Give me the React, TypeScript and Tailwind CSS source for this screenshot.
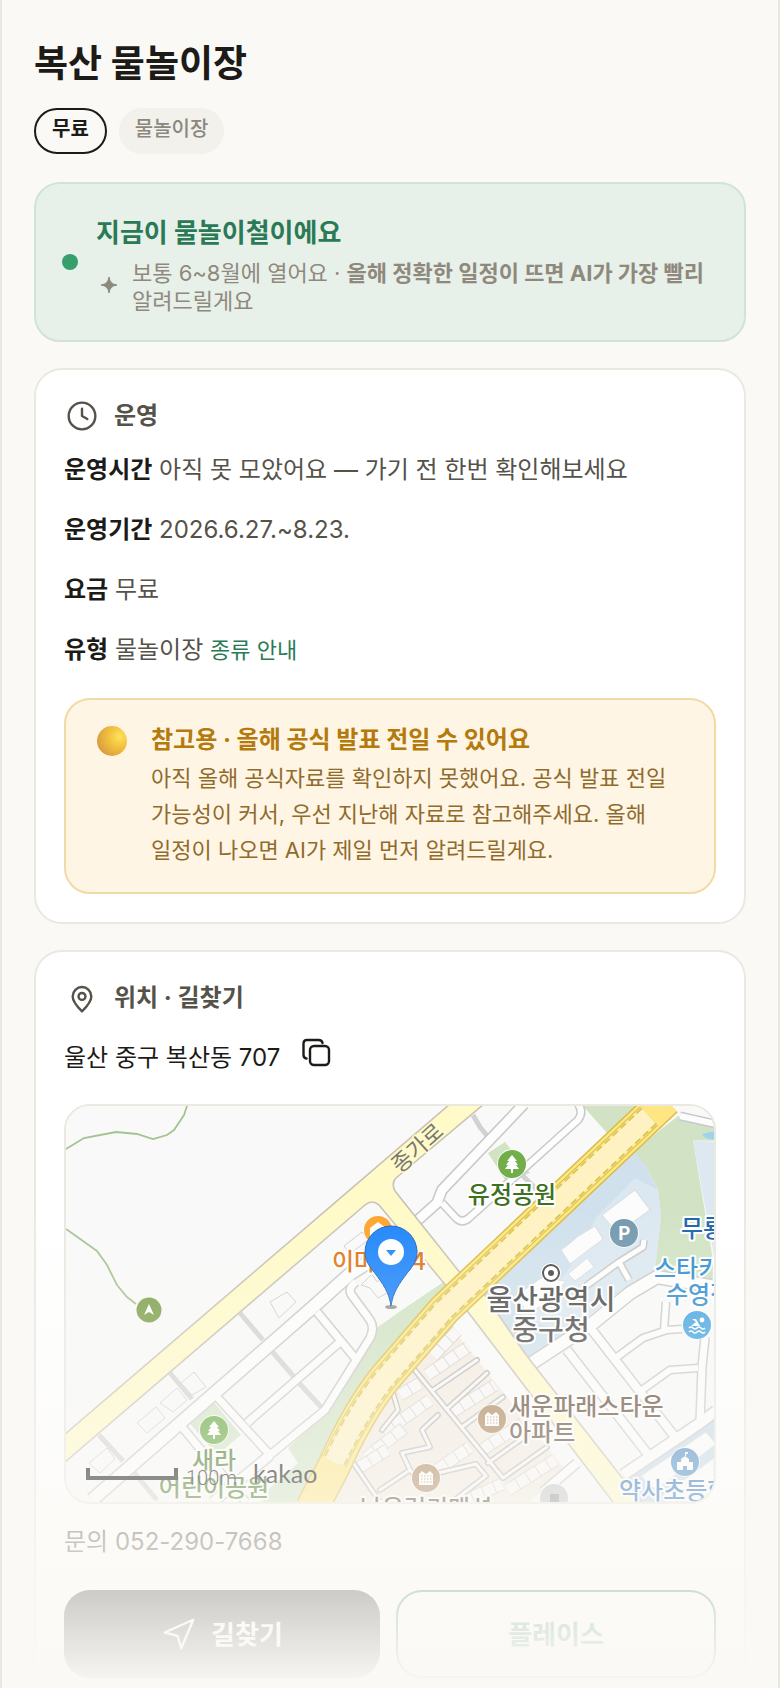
import type { ReactNode } from "react";

const rows = [
  { label: "운영시간", value: "아직 못 모았어요 — 가기 전 한번 확인해보세요" },
  { label: "운영기간", value: "2026.6.27.~8.23." },
  { label: "요금", value: "무료" },
  { label: "유형", value: "물놀이장", link: "종류 안내" },
];

// narrow streets: white line with a grey casing
const streets = [
  { d: "M26 394L246 202L284 168L312 150", w: 12 },
  { d: "M151 291L204 349L259 304L304 232Q309 222 304 214L285 188Q282 182 290 176", w: 7 },
  { d: "M181 317L274 236", w: 7 },
  { d: "M251 206L289 252", w: 7 },
  { d: "M116 321L141 351L180 396", w: 7 },
  { d: "M147 396L204 349", w: 9 },
  { d: "M458 -2L376 84L371 97L352 114", w: 9 },
  { d: "M512 -2Q518 6 512 14L403 112Q396 118 390 112L376 97", w: 6 },
  { d: "M466 257L527 217L564 187L591 171L650 181", w: 12 },
  { d: "M501 244L584 351", w: 8 },
  { d: "M526 224L609 331", w: 8 },
  { d: "M551 251L577 232L601 224L616 223", w: 6 },
  { d: "M576 284L604 264L632 262", w: 6 },
  { d: "M639 231L636 261L634 316", w: 7 },
  { d: "M557 369L634 317L650 305", w: 10 },
  { d: "M477 386L511 357", w: 8 },
  { d: "M614 10L650 18", w: 6 },
  { d: "M520 180L553 156L577 141L578 134", w: 5 },
  { d: "M553 156L563 174", w: 5 },
  { d: "M600 196L598 224", w: 6 },
];

const lanes = [
  "M347 262L437 372L481 341",
  "M367 284L411 254",
  "M382 302L421 267",
  "M396 321L437 291",
  "M422 357L464 327",
  "M327 287L332 304L316 324",
  "M372 309L356 324L364 341L336 347L344 364L314 384",
  "M344 364L351 372L410 358L420 370L386 396",
  "M286 355L314 396",
];

const houses = [
  "M361 269L402 241",
  "M367 250L391 225",
  "M386 306L429 279",
  "M334 289L354 277",
  "M318 326L364 294",
  "M300 352L338 322",
  "M416 344L457 317",
  "M442 384L489 354",
  "M371 364L404 341",
  "M294 361L321 344",
  "M396 396L436 378",
];

const buildings = [
  "M115 277L128 266L140 281L126 289Z",
  "M94 297L111 282L121 294L107 306Z",
  "M71 317L90 301L99 312L81 327Z",
  "M23 357L41 342L49 353L34 367Z",
  "M204 196L221 186L230 196L213 212Z",
  "M278 140L296 126L302 134L284 148Z",
  "M295 179L306 168L311 176L318 170L326 184L312 192L304 182Z",
];

const alleys = [
  "M174 207L197 234",
  "M204 243L229 272",
  "M232 276L256 302",
  "M104 267L126 293",
  "M33 329L57 355",
  "M66 364L91 394",
  "M407 9L414 21L427 37",
  "M456 69L474 87",
];

function Marker({ x, y, fill, children }: { x: number; y: number; fill: string; children?: ReactNode }) {
  return (
    <g transform={`translate(${x} ${y})`}>
      <circle r="15" fill="#fff" fillOpacity="0.8" />
      <circle r="14" fill={fill} />
      {children}
    </g>
  );
}

function Tree() {
  return <path d="M0-9L5-3H3L6 1H4L7 5H1V9H-1V5H-7L-4 1H-6L-3-3H-5Z" fill="#fff" />;
}

function Apartment() {
  return (
    <g>
      <path d="M-7-4L-4-7L0-4L4-7L7-4V7H-7Z" fill="#fff" />
      <path d="M-5-2H6M-5 1H6M-5 4H6" stroke="#a98257" strokeWidth="1.2" strokeDasharray="1.4 1.6" />
    </g>
  );
}

function Label({ x, y, fill, size = 24, anchor = "start", children }: {
  x: number;
  y: number;
  fill: string;
  size?: number;
  anchor?: "start" | "middle";
  children: ReactNode;
}) {
  return (
    <text
      x={x}
      y={y}
      fill={fill}
      fontSize={size}
      textAnchor={anchor}
      fontWeight="500"
      stroke="#fff"
      strokeWidth="4"
      strokeLinejoin="round"
      paintOrder="stroke"
    >
      {children}
    </text>
  );
}

function MapView() {
  const avenue = "M600 -6L378 204L319 272Q292 306 268 360L246 402";

  return (
    <svg
      viewBox="0 0 648 396"
      preserveAspectRatio="xMidYMid slice"
      className="block h-full w-full font-['Noto_Sans_CJK_KR',sans-serif]"
      role="img"
      aria-label="지도"
    >
      <rect width="648" height="396" fill="#f9f9f9" />

      {/* Green and public areas */}
      <g fill="#d1e3c4">
        <path d="M517 0L541 27L575 0Z" />
        <path d="M594 24L612 10L648 22V35L627 34L648 160V175L589 163L595 111L592 84L581 62L567 47Z" />
        <path d="M379 175L336 204L312 221L257 309L222 342L232 357L197 388V396H250L330 280L390 190Z" />
        <path d="M121 314L146 294L175 329L151 349Z" />
        <path d="M422 47L439 36L464 67L441 77Z" />
      </g>
      <path d="M627 34L648 36V150Z" fill="#dde8f1" />
      <path d="M636 29Q642 25 650 26V33Q640 34 636 29Z" fill="#9dd3ee" />
      <path d="M569 46L581 62L592 84L595 111L589 163L547 190L494 234L462 252L400 190Z" fill="#d0e1ed" />
      <path d="M569 72L592 84L595 111L589 163L547 190L500 228L455 210L500 168L530 112Z" fill="#dce8f1" />
      <path d="M557 371L648 305V396H575Z" fill="#c6d9e8" />
      <path d="M383 222L396 222L440 286L512 358L462 396H255L286 320Z" fill="#f3ebe1" />
      <path d="M386 222L400 208L420 232L515 357L500 365Z" fill="#fafafa" />

      {/* Building blocks */}
      <g fill="#fcfcfc" stroke="#d8dde2" strokeWidth="1">
        <path d="M536 109L569 84L584 104L551 127Z" />
        <path d="M511 131L529 120L537 133L504 158L495 144L503 138Z" />
        <path d="M502 168L521 152L528 161L509 175Z" />
        <path d="M450 190L475 172L500 175L482 196L462 208Z" />
        <path d="M575 370L640 326L650 338L590 384Z" />
        <path d="M596 390L648 352V396H600Z" />
      </g>
      <g fill="#f9f9f9" stroke="#cecece" strokeWidth="1">
        {buildings.map((d) => (
          <path key={d} d={d} />
        ))}
      </g>

      {/* Small streets */}
      <g fill="none" stroke="#d2d2d2" strokeWidth="5">
        {alleys.map((d) => (
          <path key={d} d={d} />
        ))}
      </g>
      <g fill="none" strokeLinejoin="round">
        {streets.map((s) => (
          <path key={s.d} d={s.d} stroke="#c9c9c9" strokeWidth={s.w + 3} />
        ))}
        {streets.map((s) => (
          <path key={s.d} d={s.d} stroke="#fdfdfd" strokeWidth={s.w} />
        ))}
      </g>
      <g fill="none">
        {houses.map((d) => (
          <g key={d}>
            <path d={d} stroke="#d6d1cb" strokeWidth="13" />
            <path d={d} stroke="#f9f8f7" strokeWidth="11" strokeDasharray="11 1" />
          </g>
        ))}
        <g strokeLinecap="round" strokeLinejoin="round">
          {lanes.map((d) => (
            <path key={d} d={d} stroke="#bdbab6" strokeWidth="6" />
          ))}
          {lanes.map((d) => (
            <path key={d} d={d} stroke="#f8f8f8" strokeWidth="3" />
          ))}
        </g>
      </g>

      {/* Yellow roads */}
      <g fill="#fffac8" stroke="#c9c2b6" strokeWidth="1.6">
        <path d="M384 -2H418L330 72Q325 77 329 85L395 168L382 182L313 99Q306 93 299 99L-2 357V329Z" />
        <path d="M396 198L414 182L458 246Q464 254 471 263L554 369L578 400H550Z" />
      </g>

      {/* Avenue */}
      <g fill="none">
        <path d={avenue} stroke="#d6bd48" strokeWidth="34" />
        <path d={avenue} stroke="#ffe682" strokeWidth="31" />
        <path d="M583 10L378 204L319 272Q292 306 268 356" stroke="#d6bd48" strokeWidth="26" />
        <path d="M583 10L378 204L319 272Q292 306 268 356" stroke="#ffec9c" strokeWidth="24" />
        <path d="M583 10L378 204L319 272Q292 306 268 356" stroke="#d8c657" strokeWidth="23" strokeDasharray="7 4" />
        <path d="M583 10L378 204L319 272Q292 306 268 356" stroke="#fff2c2" strokeWidth="19" />
      </g>

      {/* Trails */}
      <g fill="none" stroke="#a3c491" strokeWidth="1.8">
        <path d="M0 43L18 32L50 26L71 28L87 33L101 29L108 24L118 9L121 0" />
        <path d="M0 123L31 145L41 159L51 179L61 191L70 198" />
      </g>
      <circle cx="83" cy="204" r="12.5" fill="#7d9f4a" />
      <path d="M83 198L88 209L83 206L78 209Z" fill="#fff" />

      <text
        transform="translate(334 68) rotate(-42)"
        fill="#777"
        fontSize="22"
        stroke="#fffac8"
        strokeWidth="3"
        paintOrder="stroke"
      >
        종가로
      </text>

      <Marker x={446} y={58} fill="#72ae4a"><Tree /></Marker>
      <Label x={446} y={97} fill="#3d7020" anchor="middle">유정공원</Label>

      <Marker x={558} y={127} fill="#7399ae">
        <text y="7" fontSize="19" fontWeight="700" fill="#fff" textAnchor="middle">P</text>
      </Marker>

      <circle cx="485" cy="167" r="10" fill="#fff" />
      <circle cx="485" cy="167" r="8" fill="none" stroke="#444" strokeWidth="2" />
      <circle cx="485" cy="167" r="3" fill="#444" />
      <Label x={485} y={204} fill="#4a4a4a" size={28} anchor="middle">울산광역시</Label>
      <Label x={485} y={234} fill="#4a4a4a" size={28} anchor="middle">중구청</Label>

      <Label x={615} y={131} fill="#1e64ae">무룡</Label>
      <Label x={588} y={171} fill="#2f8fd0">스타키즈</Label>
      <Label x={600} y={197} fill="#2f8fd0">수영장</Label>
      <Marker x={631} y={219} fill="#46a5e2">
        <circle cx="5" cy="-5" r="2.4" fill="#fff" />
        <path d="M-5-6H-1L3 1H-6L-1-3Z" fill="#fff" />
        <path d="M-8 3Q-6 1-4 3T0 3T4 3T8 3M-8 7Q-6 5-4 7T0 7T4 7T8 7" fill="none" stroke="#fff" strokeWidth="1.6" />
      </Marker>

      <Marker x={426} y={313} fill="#a98257"><Apartment /></Marker>
      <Label x={443} y={309} fill="#5b4433">새운파래스타운</Label>
      <Label x={443} y={335} fill="#5b4433">아파트</Label>
      <Marker x={360} y={372} fill="#a98257"><Apartment /></Marker>
      <Label x={360} y={411} fill="#5b4433" anchor="middle">남운럭키맨션</Label>

      <Marker x={488} y={392} fill="#c4c4c4">
        <path d="M-4-4H5V8H-4Z" fill="#8a9090" />
      </Marker>

      <Marker x={619} y={356} fill="#4588c4">
        <path d="M-8 8V0H-4V-3L0-6L4-3V0H8V8H2V4H-2V8ZM0-6V-10H3V-8H1V-6Z" fill="#fff" />
      </Marker>
      <Label x={553} y={393} fill="#1f6cba">약사초등학교</Label>

      <Marker x={148} y={324} fill="#5fa437"><Tree /></Marker>
      <Label x={148} y={363} fill="#3d7020" anchor="middle">새라</Label>
      <Label x={148} y={390} fill="#3d7020" anchor="middle">어린이공원</Label>

      <Marker x={312} y={124} fill="#ffa52e">
        <path d="M-8-2L0-8L8-2V8H-8Z" fill="#fff" />
      </Marker>
      <Label x={266} y={164} fill="#e07415">이마트24</Label>

      {/* Selected place */}
      <ellipse cx="325" cy="201" rx="6" ry="2" fill="#000" fillOpacity="0.4" />
      <path
        d="M325 200C323 186 317 178 308 166C302 159 299 153 299 146A26 26 0 0 1 351 146C351 153 348 159 342 166C333 178 327 186 325 200Z"
        fill="#1f86fb"
        stroke="#1f62b8"
        strokeWidth="1"
      />
      <circle cx="325" cy="146" r="13" fill="#fff" />
      <path d="M320 144H330L325 150Z" fill="#1f86fb" />

      {/* Scale */}
      <path d="M22 362V372H110V362" fill="none" stroke="#000" strokeWidth="4" />
      <text x="120" y="379" fontSize="20" fontWeight="300" className="font-['Roboto',sans-serif]" fill="#000">100m</text>
      <text x="187" y="377" fontSize="25" className="font-['Lato',sans-serif]" fill="#000">kakao</text>
    </svg>
  );
}

function CardTitle({ icon, children }: { icon: ReactNode; children: ReactNode }) {
  return (
    <h2 className="flex h-9 items-center gap-3.5 text-2xl font-bold text-[#55524a]">
      <span className="flex w-9 justify-center">{icon}</span>
      {children}
    </h2>
  );
}

export default function App() {
  return (
    <div className="relative h-screen overflow-hidden break-keep border-x-2 border-[#e9e7df] bg-[#faf9f5] px-8 pt-[42px] font-['Inter','Noto_Sans_CJK_KR',sans-serif] text-[#1c1b18]">
      <h1 className="text-[37px] leading-11 font-bold">복산 물놀이장</h1>

      <div className="mt-[22px] flex gap-3 text-xl">
        <span className="flex h-[46px] items-start rounded-full border-2 border-[#1c1b18] px-4 pt-[5px] font-bold">무료</span>
        <span className="flex h-[46px] items-start rounded-full bg-[#f2f1ec] px-4 pt-[7px] font-medium text-[#8c877c]">물놀이장</span>
      </div>

      {/* Season banner */}
      <section className="mt-7 flex items-center gap-[18px] rounded-[26px] border-2 border-[#cfe4d8] bg-[#e8f0ea] px-[26px] py-[25px]">
        <span className="size-4 shrink-0 rounded-full bg-[#35a06b]" />
        <div className="pt-1.5">
          <h2 className="text-[26px] leading-9 font-bold text-[#2b7a56]">지금이 물놀이철이에요</h2>
          <div className="mt-2 flex items-center gap-3 text-[22px] leading-7 text-[#8f897d]">
            <svg viewBox="0 0 24 24" className="mb-1 size-6 shrink-0" fill="currentColor" aria-hidden="true">
              <path d="M13 4Q13.800 11.200 21 12Q13.800 12.800 13 20Q12.200 12.800 5 12Q12.200 11.200 13 4Z" stroke="currentColor" strokeWidth="1" />
            </svg>
            <p>
              보통 6~8월에 열어요 · <b>올해 정확한 일정이 뜨면 AI가 가장 빨리</b> 알려드릴게요
            </p>
          </div>
        </div>
      </section>

      {/* Operation */}
      <section className="mt-[26px] rounded-[28px] border-2 border-[#eae8e1] bg-white p-7">
        <CardTitle
          icon={
            <svg viewBox="0 0 24 24" className="size-8" fill="none" stroke="currentColor" strokeWidth="1.8" strokeLinecap="round" strokeLinejoin="round" aria-hidden="true">
              <circle cx="12" cy="12" r="10" />
              <path d="M12 6.500V12l4 2.300" />
            </svg>
          }
        >
          운영
        </CardTitle>
        <div className="mt-4 space-y-5 text-2xl leading-10 text-[#55524a]">
          {rows.map((row) => (
            <p key={row.label}>
              <b className="text-[#1c1b18]">{row.label}</b> {row.value}
              {row.link && (
                <>
                  {" "}
                  <a href="#types" className="text-[22px] text-[#2b7a56]">{row.link}</a>
                </>
              )}
            </p>
          ))}
        </div>

        <div className="mt-7 flex gap-6 rounded-[26px] border-2 border-[#f0dba6] bg-[#fff5e5] p-6 pl-[31px]">
          <span className="mt-0.5 size-[30px] shrink-0 rounded-full bg-[radial-gradient(circle_at_75%_35%,#ffe35c_0%,#f3c23f_35%,#dba03e_75%,#d98a5c_100%)]" />
          <div>
            <h3 className="mb-1 text-2xl leading-8 font-bold text-[#b47a0c]">참고용 · 올해 공식 발표 전일 수 있어요</h3>
            <p className="text-[22px] leading-9 text-[#8f6b2c]">
              아직 올해 공식자료를 확인하지 못했어요. 공식 발표 전일 가능성이 커서, 우선 지난해 자료로 참고해주세요. 올해 일정이 나오면 AI가 제일 먼저 알려드릴게요.
            </p>
          </div>
        </div>
      </section>

      {/* Location */}
      <section className="mt-[26px] rounded-[28px] border-2 border-[#eae8e1] bg-white p-7">
        <CardTitle
          icon={
            <svg viewBox="0 0 24 24" className="size-8" fill="none" stroke="currentColor" strokeWidth="1.8" strokeLinejoin="round" aria-hidden="true">
              <path d="M12 22C9 19 5 15 5 10.800a7 7 0 0 1 14 0C19 15 15 19 12 22Z" />
              <circle cx="12" cy="10.800" r="2.600" />
            </svg>
          }
        >
          위치 · 길찾기
        </CardTitle>
        <div className="mt-5 flex items-start gap-5 text-2xl leading-10">
          <p className="pt-0.5">울산 중구 복산동 707</p>
          <button type="button" aria-label="주소 복사">
            <svg viewBox="0 0 32 32" className="size-8" fill="none" stroke="currentColor" strokeWidth="2.400" strokeLinecap="round" strokeLinejoin="round">
              <rect x="10" y="10" width="19" height="19" rx="4" />
              <path d="M6.500 22.500Q3.500 22 3.500 19V7.500Q3.500 4 7 4H18.500Q22 4 22.500 7" />
            </svg>
          </button>
        </div>

        <div className="mt-[26px] h-[400px] overflow-hidden rounded-[26px] border-2 border-[#eae8e1]">
          <MapView />
        </div>

        <p className="mt-[18px] text-2xl leading-10 text-[#55524a]">문의 052-290-7668</p>

        <div className="mt-7 flex gap-4 text-[26px] font-bold">
          <button type="button" className="flex h-[88px] flex-1 items-center justify-center gap-3.5 rounded-[26px] bg-[#1c1b18] text-white">
            <svg viewBox="0 0 24 24" className="size-9" fill="none" stroke="currentColor" strokeWidth="1.600" strokeLinejoin="round" aria-hidden="true">
              <path d="M21.500 2.500L2.500 11L11 13.200L13.500 21.500Z" />
            </svg>
            길찾기
          </button>
          <button type="button" className="h-[88px] flex-1 rounded-[26px] border-2 border-[#2b7a56] text-[#2b7a56]">플레이스</button>
        </div>
      </section>

      {/* Bottom fade */}
      <div className="pointer-events-none absolute -inset-x-0.5 bottom-0 h-[480px] bg-linear-to-b from-[#faf9f5]/0 to-[#faf9f5]" />
    </div>
  );
}
